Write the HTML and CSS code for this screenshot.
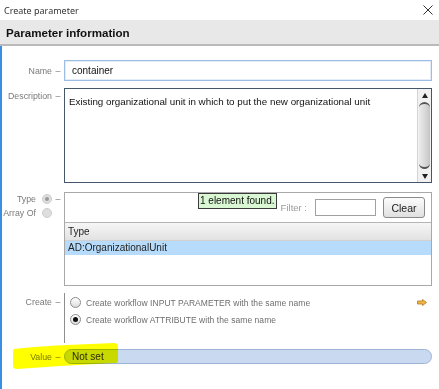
FILE: index.html
```html
<!DOCTYPE html>
<html lang="en">
<head>
    <meta charset="UTF-8">
    <title>Create parameter</title>
    <link rel="stylesheet" href="styles.css">
</head>
<body>
    <div class="titlebar">
        <span>Create parameter</span>
        <svg class="close" width="10" height="10" viewBox="0 0 10 10">
            <path d="M0.5 0.5L9.5 9.5M9.5 0.5L0.5 9.5" stroke="#333" stroke-width="1" fill="none"/>
        </svg>
    </div>
    <div class="header">Parameter information</div>

    <div class="content">
        <div class="row row-name">
            <div class="label">Name<span class="dash">–</span></div>
            <div class="field input focused">container</div>
        </div>

        <div class="row row-desc">
            <div class="label top">Description<span class="dash">–</span></div>
            <div class="field textarea">
                <div class="textarea-text">Existing organizational unit in which to put the new organizational unit</div>
                <div class="scrollbar">
                    <div class="sb-btn"><span class="tri up"></span></div>
                    <div class="sb-thumb"></div>
                    <div class="sb-btn"><span class="tri down"></span></div>
                </div>
            </div>
        </div>

        <div class="row row-type">
            <div class="label type-opts">
                <div class="opt">Type<span class="radio dim dot"></span><span class="dash">–</span></div>
                <div class="opt">Array Of<span class="radio dim"></span><span class="dash blank">–</span></div>
            </div>
            <div class="field typebox">
                <div class="toolbar">
                    <div class="tooltip">1 element found.</div>
                    <span class="filter-label">Filter :</span>
                    <div class="filter-input"></div>
                    <button class="clear">Clear</button>
                </div>
                <div class="table">
                    <div class="th">Type</div>
                    <div class="tr selected">AD:OrganizationalUnit</div>
                </div>
            </div>
        </div>

        <div class="row row-create">
            <div class="label top">Create<span class="dash">–</span></div>
            <div class="field create">
                <div class="opt-line">
                    <span class="radio"></span>
                    <span>Create workflow INPUT PARAMETER with the same name</span>
                    <svg class="arrow" width="10" height="7" viewBox="0 0 10 7">
                        <path d="M0.5 2h5V0.5l4 3-4 3V5h-5z" fill="#f2b443" stroke="#b27a1c" stroke-width="0.8"/>
                    </svg>
                </div>
                <div class="opt-line">
                    <span class="radio on"></span>
                    <span>Create workflow ATTRIBUTE with the same name</span>
                </div>
            </div>
        </div>

        <div class="row row-value">
            <div class="label">Value<span class="dash">–</span></div>
            <div class="field pill">Not set</div>
        </div>
    </div>

    <svg class="highlight" width="439" height="389" viewBox="0 0 439 389">
        <path d="M14 349 C30 347 60 345 90 344 L114 343 Q118 343 118 347 L118 361 Q118 363 114 363 L60 366 L17 369 Q13 369 13 366 L13 352 Q13 349 14 349Z" fill="#ffff00"/>
    </svg>
</body>
</html>
```

FILE: styles.css
```css
body {
    margin: 0;
    width: 439px;
    height: 389px;
    background: #fff;
    font-family: "Liberation Sans", Arial, sans-serif;
    color: #222;
    position: relative;
    overflow: hidden;
}

.titlebar {
    height: 20px;
    display: flex;
    align-items: center;
    justify-content: space-between;
    padding: 0 6px 0 4px;
    font-family: "Noto Sans", sans-serif;
    font-size: 9px;
    color: #333;
}

.header {
    height: 24px;
    line-height: 25px;
    padding-left: 6px;
    background: #e8e8e8;
    border-bottom: 2px solid #bababa;
    font-weight: bold;
    font-size: 11.6px;
    color: #111;
}

.content {
    border-left: 2px solid #3a8fe2;
    height: 343px;
    padding-right: 7px;
}

.row {
    display: flex;
}

.label {
    width: 62px;
    flex: none;
    display: flex;
    justify-content: flex-end;
    align-items: center;
    font-size: 8.8px;
    color: #7a7a7a;
}

.label.top {
    align-items: flex-start;
}

.dash {
    width: 12px;
    text-align: center;
}

.dash.blank {
    visibility: hidden;
}

.field {
    flex: 1;
    box-sizing: border-box;
}

/* name */
.row-name {
    padding-top: 14px;
    height: 21px;
}

.input {
    height: 21px;
    border: 1px solid #9dbde2;
    box-shadow: inset 0 0 0 1px #e2ecf8;
    font-size: 10px;
    line-height: 19px;
    padding-left: 7px;
    color: #111;
}

/* description */
.row-desc {
    margin-top: 7px;
    height: 95px;
}

.row-desc .label {
    padding-top: 3px;
}

.textarea {
    height: 95px;
    border: 1px solid #44566a;
    display: flex;
}

.textarea-text {
    flex: 1;
    font-size: 9.8px;
    padding: 7px 0 0 4px;
    color: #111;
}

.scrollbar {
    width: 13px;
    display: flex;
    flex-direction: column;
    background: #f1f1f1;
    border-left: 1px solid #d4d4d4;
}

.sb-btn {
    height: 12px;
    display: flex;
    align-items: center;
    justify-content: center;
}

.tri {
    width: 0;
    height: 0;
    border-left: 3px solid transparent;
    border-right: 3px solid transparent;
}

.tri.up {
    border-bottom: 5px solid #222;
}

.tri.down {
    border-top: 5px solid #222;
}

.sb-thumb {
    flex: 1;
    margin: 1px 1px;
    border-radius: 6px;
    border-top: 2px solid #555;
    border-bottom: 2px solid #555;
    background: linear-gradient(to right, #ececec, #d6d6d6 60%, #c4c4c4);
}

/* type */
.row-type {
    margin-top: 9px;
    height: 94px;
}

.type-opts {
    flex-direction: column;
    justify-content: flex-start;
    align-items: flex-end;
}

.opt {
    display: flex;
    align-items: center;
    height: 14px;
}

.radio {
    width: 11px;
    height: 11px;
    box-sizing: border-box;
    border-radius: 50%;
    border: 1px solid #8c8c8c;
    background: linear-gradient(#ffffff, #dcdcdc);
    display: flex;
    align-items: center;
    justify-content: center;
    flex: none;
}

.radio.dim {
    width: 10px;
    height: 10px;
    margin-left: 6px;
    border-color: #cdcdcd;
    background: #dedede;
}

.radio.dot::after,
.radio.on::after {
    content: "";
    width: 4px;
    height: 4px;
    border-radius: 50%;
    background: #9a9a9a;
}

.radio.on::after {
    width: 5px;
    height: 5px;
    background: #111;
}

.typebox {
    height: 94px;
    border: 1px solid #a8a8a8;
    display: flex;
    flex-direction: column;
}

.toolbar {
    height: 29px;
    flex: none;
    display: flex;
    align-items: center;
    justify-content: flex-end;
    padding-right: 6px;
    position: relative;
}

.tooltip {
    position: absolute;
    left: 133px;
    top: 0;
    height: 16px;
    box-sizing: border-box;
    padding: 0 1px;
    border: 1px solid #3a3a3a;
    background: #d9f7d3;
    font-size: 10px;
    line-height: 14px;
    color: #111;
}

.filter-label {
    font-size: 9.5px;
    color: #9a9a9a;
    margin-right: 8px;
}

.filter-input {
    width: 61px;
    height: 17px;
    box-sizing: border-box;
    border: 1px solid #a0a0a0;
    background: #fff;
    margin-right: 7px;
}

.clear {
    width: 42px;
    height: 21px;
    border: 1px solid #8a8a8a;
    border-radius: 3px;
    background: linear-gradient(#fcfcfc, #e0e0e0);
    font-family: "Liberation Sans", Arial, sans-serif;
    font-size: 10.5px;
    color: #1a1a1a;
    padding: 0;
}

.table {
    flex: 1;
    border-top: 1px solid #b5b5b5;
}

.th {
    height: 17px;
    line-height: 17px;
    padding-left: 3px;
    font-size: 10px;
    background: linear-gradient(#f6f6f6, #e2e2e2);
    border-bottom: 1px solid #d0d0d0;
}

.tr {
    height: 14px;
    line-height: 14px;
    padding-left: 3px;
    font-size: 10px;
}

.tr.selected {
    background: #b7dcfb;
}

/* create */
.row-create {
    margin-top: 7px;
    height: 50px;
}

.row-create .label {
    padding-top: 4px;
}

.create {
    border-left: 1px solid #8e8e8e;
    padding: 1px 5px 0 5px;
}

.opt-line {
    display: flex;
    align-items: center;
    height: 17px;
    gap: 5px;
    font-size: 8.5px;
    letter-spacing: 0.05px;
    color: #6e6e6e;
}

.arrow {
    margin-left: auto;
}

/* value */
.row-value {
    margin-top: 6px;
    height: 15px;
}

.pill {
    height: 15px;
    border: 1px solid #9cb3d6;
    border-radius: 8px;
    background: #c8d9f0;
    font-size: 10px;
    line-height: 13px;
    padding-left: 7px;
    color: #2a2a2a;
}

.highlight {
    position: absolute;
    left: 0;
    top: 0;
    pointer-events: none;
    mix-blend-mode: multiply;
}
```
